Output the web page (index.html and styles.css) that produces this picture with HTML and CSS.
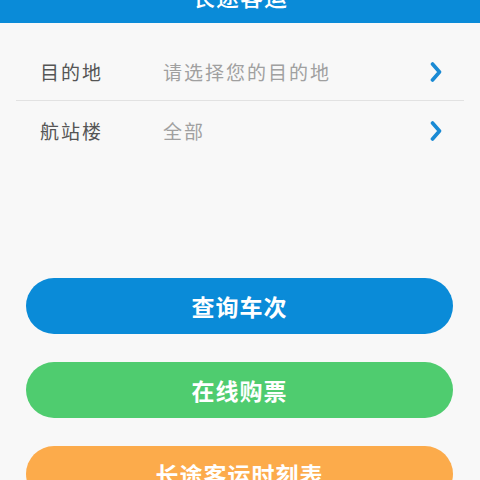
FILE: index.html
```html
<!DOCTYPE html>
<html lang="zh">
<head>
<meta charset="utf-8">
<link rel="stylesheet" href="styles.css">
</head>
<body>
<header class="header"><div class="title">长途客运</div></header>
<main class="content">
  <div class="list">
    <div class="row">
      <span class="label">目的地</span>
      <span class="value">请选择您的目的地</span>
      <svg class="chev" viewBox="0 0 12 20" width="12" height="20"><path d="M2.5 2 L9.5 10 L2.5 18" fill="none" stroke="#1a8ad4" stroke-width="3.6" stroke-linejoin="round" stroke-linecap="round"/></svg>
    </div>
    <div class="divider"></div>
    <div class="row">
      <span class="label">航站楼</span>
      <span class="value">全部</span>
      <svg class="chev" viewBox="0 0 12 20" width="12" height="20"><path d="M2.5 2 L9.5 10 L2.5 18" fill="none" stroke="#1a8ad4" stroke-width="3.6" stroke-linejoin="round" stroke-linecap="round"/></svg>
    </div>
  </div>
  <div class="buttons">
    <div class="btn btn-blue">查询车次</div>
    <div class="btn btn-green">在线购票</div>
    <div class="btn btn-orange">长途客运时刻表</div>
  </div>
</main>
</body>
</html>
```
FILE: styles.css
```css
html, body {
  margin: 0;
  padding: 0;
  background: #f8f8f8;
  font-family: "Noto Sans CJK SC", "Noto Sans", sans-serif;
  width: 480px;
  height: 480px;
  overflow: hidden;
}
.header {
  height: 23px;
  background: #0a8bd8;
  overflow: hidden;
  display: flex;
  justify-content: center;
}
.title {
  margin-top: -17px;
  font-size: 23px;
  line-height: 26px;
  font-weight: 500;
  color: #ffffff;
  letter-spacing: 1px;
}
.content {
  padding: 19px 16px 0 16px;
}
.row {
  height: 58px;
  display: flex;
  align-items: center;
  padding: 0 22px 0 24px;
}
.label {
  width: 123px;
  font-size: 19px;
  letter-spacing: 2px;
  color: #555555;
}
.value {
  flex: 1;
  font-size: 19px;
  letter-spacing: 2px;
  color: #a0a0a0;
}
.chev {
  display: block;
  margin-top: 2px;
}
.divider {
  height: 1px;
  background: #e2e2e2;
}
.buttons {
  margin-top: 119px;
  padding: 0 11px 0 10px;
  display: flex;
  flex-direction: column;
  gap: 28px;
}
.btn {
  height: 56px;
  border-radius: 28px;
  display: flex;
  align-items: center;
  justify-content: center;
  color: #ffffff;
  font-size: 23px;
  font-weight: 700;
  letter-spacing: 1px;
}
.btn-blue { background: #0a8bd8; }
.btn-green { background: #4fcc6f; }
.btn-orange { background: #fcab4b; }
```
